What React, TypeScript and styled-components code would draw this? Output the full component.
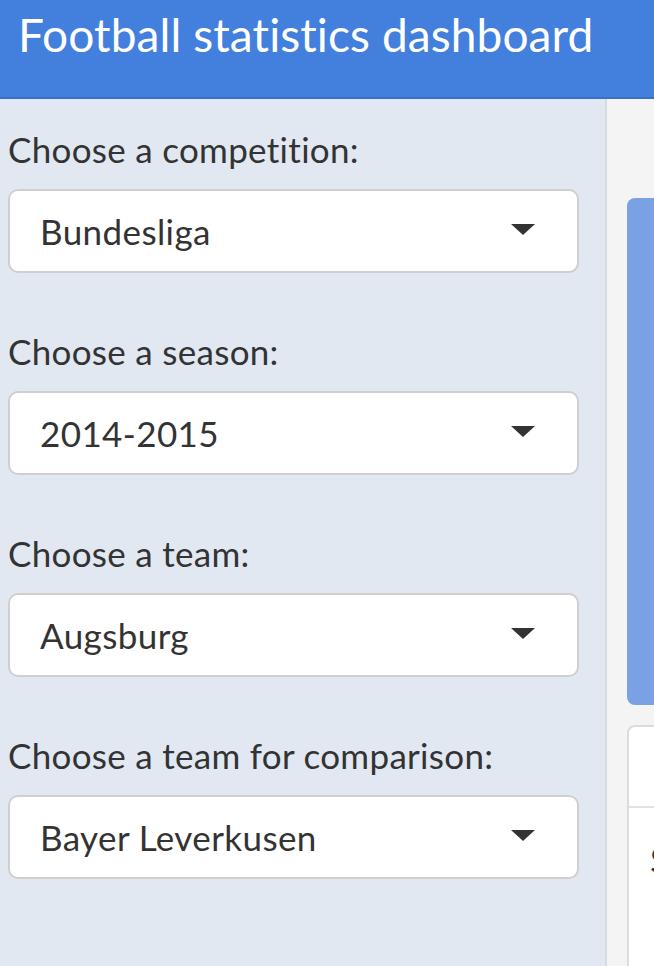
import React from "react";
import styled, { createGlobalStyle } from "styled-components";

const GlobalStyle = createGlobalStyle`
  html, body {
    margin: 0;
    padding: 0;
    overflow: hidden;
    background: #f4f4f4;
  }
  body {
    font-family: "Lato", "Noto Sans", sans-serif;
    font-variant-ligatures: none;
    color: #333;
  }
`;

const Page = styled.div`
  width: 654px;
  height: 966px;
  display: flex;
  flex-direction: column;
  overflow: hidden;
`;

const Header = styled.header`
  height: 97px;
  flex: none;
  background: #4380dd;
  border-bottom: 2px solid #3a6fca;
  box-sizing: content-box;
  display: flex;
  align-items: flex-start;
  padding-left: 18px;
`;

const Title = styled.h1`
  margin: 0;
  font-family: "Lato", sans-serif;
  font-variant-ligatures: none;
  font-weight: 400;
  font-size: 46px;
  letter-spacing: 0.1px;
  line-height: 70px;
  color: #fff;
  white-space: nowrap;
`;

const Body = styled.div`
  flex: 1;
  display: flex;
  min-height: 0;
`;

const Sidebar = styled.aside`
  width: 597px;
  flex: none;
  background: #e1e8f2;
  border-right: 2px solid #d6dbe2;
  padding: 29px 0 0 8px;
  display: flex;
  flex-direction: column;
  gap: 57px;
`;

const Field = styled.div`
  display: flex;
  flex-direction: column;
  gap: 19px;
`;

const Label = styled.label`
  font-size: 35px;
  letter-spacing: 0.3px;
  line-height: 42px;
  color: #333;
  white-space: nowrap;
`;

const Select = styled.div`
  width: 571px;
  height: 84px;
  box-sizing: border-box;
  background: #fff;
  border: 2px solid #cfcfcf;
  border-radius: 10px;
  display: flex;
  align-items: center;
  justify-content: space-between;
  padding: 0 42px 0 30px;
`;

const Value = styled.span`
  font-size: 35px;
  letter-spacing: 0.4px;
  color: #333;
  white-space: nowrap;
`;

const Caret = styled.span`
  width: 0;
  height: 0;
  border-left: 12px solid transparent;
  border-right: 12px solid transparent;
  border-top: 11px solid #333;
  margin-top: -4px;
`;

const Main = styled.main`
  flex: 1;
  min-width: 0;
  overflow: hidden;
  padding: 99px 0 0 20px;
  display: flex;
  flex-direction: column;
  gap: 20px;
`;

const InfoBox = styled.div`
  width: 600px;
  height: 507px;
  flex: none;
  background: #79a1e3;
  border-radius: 8px;
`;

const Card = styled.div`
  width: 600px;
  flex: 1;
  background: #fff;
  border: 2px solid #dcdcdc;
  border-bottom: none;
  border-radius: 8px 8px 0 0;
  display: flex;
  flex-direction: column;
`;

const CardHeader = styled.div`
  height: 79px;
  border-bottom: 2px solid #e2e2e2;
`;

const CardBody = styled.div`
  padding: 30px 0 0 21px;
  font-size: 35px;
  color: #333;
  white-space: nowrap;
`;

const fields = [
  { label: "Choose a competition:", value: "Bundesliga" },
  { label: "Choose a season:", value: "2014-2015" },
  { label: "Choose a team:", value: "Augsburg" },
  { label: "Choose a team for comparison:", value: "Bayer Leverkusen" },
];

export default function App() {
  return (
    <Page>
      <GlobalStyle />
      <Header>
        <Title>Football statistics dashboard</Title>
      </Header>
      <Body>
        <Sidebar>
          {fields.map((f) => (
            <Field key={f.label}>
              <Label>{f.label}</Label>
              <Select>
                <Value>{f.value}</Value>
                <Caret />
              </Select>
            </Field>
          ))}
        </Sidebar>
        <Main>
          <InfoBox />
          <Card>
            <CardHeader />
            <CardBody>Statistics</CardBody>
          </Card>
        </Main>
      </Body>
    </Page>
  );
}
